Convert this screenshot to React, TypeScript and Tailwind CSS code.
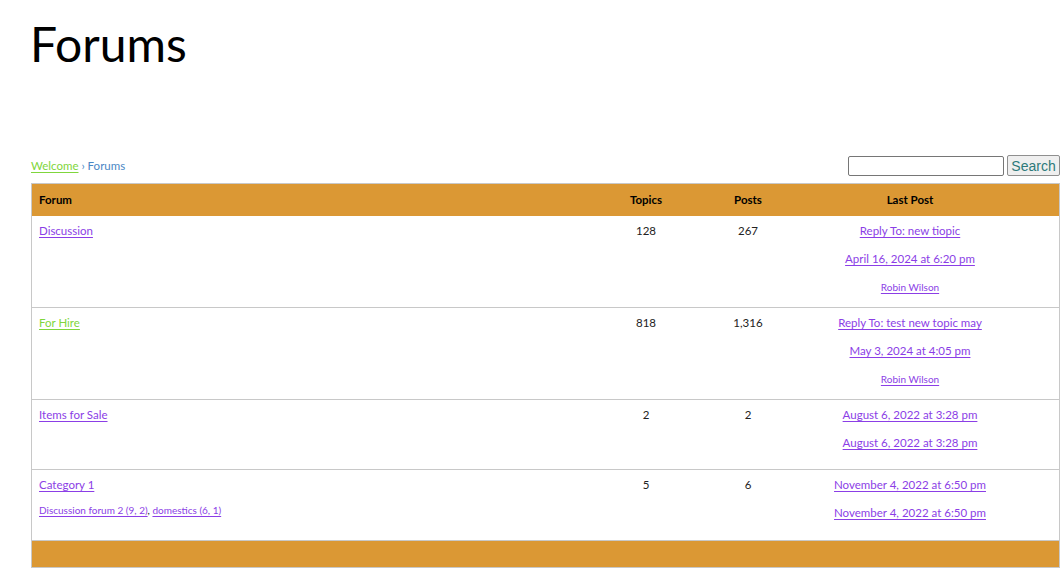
import React from 'react';

const font = { fontFamily: 'Lato, "Noto Sans", sans-serif' };

type Row = {
  name: string;
  green?: boolean;
  topics: string;
  posts: string;
  last: { text: string; small?: boolean }[];
  sub?: string[];
  h: string;
};

const rows: Row[] = [
  {
    name: 'Discussion',
    topics: '128',
    posts: '267',
    last: [{ text: 'Reply To: new tiopic' }, { text: 'April 16, 2024 at 6:20 pm' }, { text: 'Robin Wilson', small: true }],
    h: 'h-[92px]',
  },
  {
    name: 'For Hire',
    green: true,
    topics: '818',
    posts: '1,316',
    last: [{ text: 'Reply To: test new topic may' }, { text: 'May 3, 2024 at 4:05 pm' }, { text: 'Robin Wilson', small: true }],
    h: 'h-[92px]',
  },
  {
    name: 'Items for Sale',
    topics: '2',
    posts: '2',
    last: [{ text: 'August 6, 2022 at 3:28 pm' }, { text: 'August 6, 2022 at 3:28 pm' }],
    h: 'h-[70px]',
  },
  {
    name: 'Category 1',
    topics: '5',
    posts: '6',
    last: [{ text: 'November 4, 2022 at 6:50 pm' }, { text: 'November 4, 2022 at 6:50 pm' }],
    sub: ['Discussion forum 2 (9, 2)', 'domestics (6, 1)'],
    h: 'h-[71px]',
  },
];

const link = 'text-[#8b3ee6] underline underline-offset-2';

export default function App() {
  return (
    <div className="min-h-[572px] bg-white text-[11px] text-[#222]" style={font}>
      {/* Title */}
      <h1 className="pl-[30px] pt-[12px] text-[48px] leading-[64px] text-black">Forums</h1>

      {/* Breadcrumb + search */}
      <div className="mt-[79px] flex items-center justify-between pl-[31px] pr-[1px]">
        <div className="text-[11.5px]">
          <a href="#" className="text-[#7fd63c] underline underline-offset-2">Welcome</a>
          <span className="text-[#4a87c5]"> › Forums</span>
        </div>
        <div className="flex items-center gap-[3px]">
          <input className="h-[20px] w-[156px] rounded-[2px] border border-[#767676] bg-white" />
          <button
            className="h-[21px] w-[53px] rounded-[2px] border border-[#8f8f8f] bg-[#efefef] text-[14px] leading-none text-[#2d7a7a]"
            style={{ fontFamily: '"Liberation Sans", Arial, sans-serif' }}
          >
            Search
          </button>
        </div>
      </div>

      {/* Table */}
      <div className="ml-[31px] mr-[1px] mt-[7px] border border-[#c8c8c8]">
        <div className="grid h-[32px] grid-cols-[1fr_102px_102px_260px] items-center bg-[#db9834] text-[11.5px] font-bold text-black">
          <div className="pl-[7px]">Forum</div>
          <div className="text-center">Topics</div>
          <div className="text-center">Posts</div>
          <div className="pr-[38px] text-center">Last Post</div>
        </div>
        {rows.map((r) => (
          <div key={r.name} className={`grid grid-cols-[1fr_102px_102px_260px] border-b border-[#c8c8c8] text-[11.5px] ${r.h}`}>
            <div className="pl-[7px] pt-[6px]">
              <a href="#" className={r.green ? 'text-[#7fd63c] underline underline-offset-2' : link}>{r.name}</a>
              {r.sub && (
                <div className="mt-[10px] text-[10px]">
                  <a href="#" className={link}>{r.sub[0]}</a>, <a href="#" className={link}>{r.sub[1]}</a>
                </div>
              )}
            </div>
            <div className="pt-[6px] text-center">{r.topics}</div>
            <div className="pt-[6px] text-center">{r.posts}</div>
            <div className="flex flex-col items-center gap-[8px] pr-[38px] pt-[5px]">
              {r.last.map((l, i) => (
                <a key={i} href="#" className={`${link} ${l.small ? 'text-[10px] leading-[20px]' : 'leading-[20px]'}`}>
                  {l.text}
                </a>
              ))}
            </div>
          </div>
        ))}
        <div className="h-[26px] bg-[#db9834]" />
      </div>
    </div>
  );
}
